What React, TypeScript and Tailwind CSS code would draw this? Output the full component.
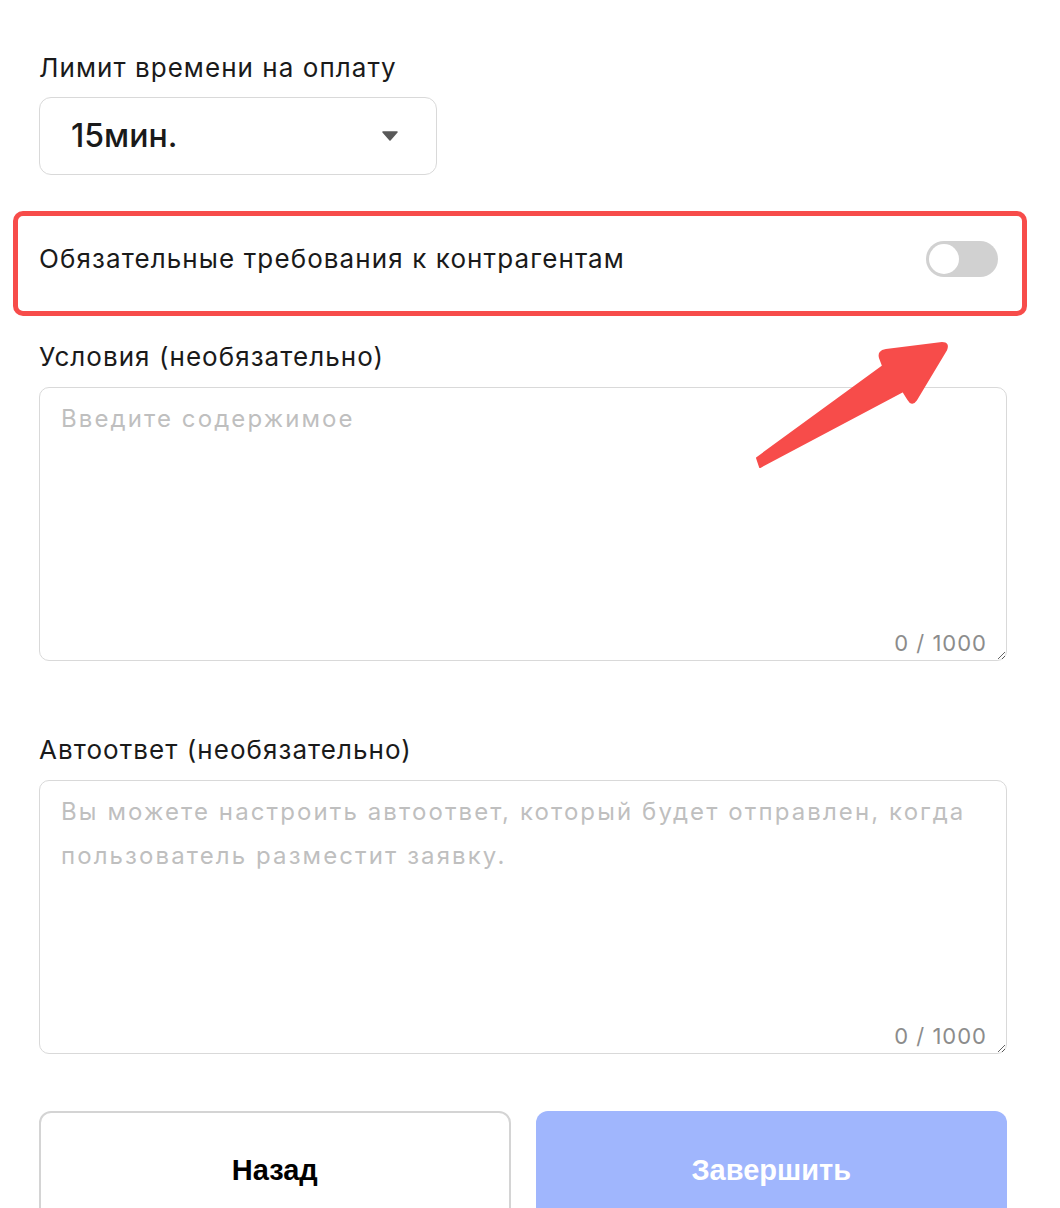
import React from 'react'

const font = { fontFamily: 'Inter, "Noto Sans", sans-serif' }
const btnFont = { fontFamily: '"Liberation Sans", Arial, sans-serif' }

function Counter() {
    return (
        <span className="pointer-events-none absolute bottom-[3px] right-[20px] text-[22px] leading-[30px] tracking-[1px] text-[#8c8c8c]">
            0 / 1000
        </span>
    )
}

function Field({ label, placeholder }: { label: string; placeholder: string }) {
    return (
        <div className="flex flex-col gap-[14px]">
            <label className="text-[26px] leading-[32px] tracking-[1.05px] text-[#1a1a1a]">{label}</label>
            <div className="relative">
                <textarea
                    placeholder={placeholder}
                    className="block h-[274px] w-full resize-y rounded-[10px] border border-[#d9d9d9] bg-white px-[21px] pt-[9px] text-[24px] leading-[44px] tracking-[2.1px] text-[#1a1a1a] outline-none placeholder:text-[#bfbfbf]"
                />
                <Counter />
            </div>
        </div>
    )
}

export default function App() {
    return (
        <div className="relative min-h-[1208px] overflow-hidden bg-white" style={font}>
            <div className="flex flex-col px-[39px] pt-[52px] pr-[53px]">
                <div className="flex flex-col gap-[13px]">
                    <label className="text-[26px] leading-[32px] tracking-[1.05px] text-[#1a1a1a]">Лимит времени на оплату</label>
                    <button className="flex h-[78px] w-[398px] items-center justify-between rounded-[12px] border border-[#d9d9d9] bg-white pl-[31px] pr-[38px]">
                        <span className="text-[32px] font-medium text-[#1a1a1a]">15мин.</span>
                        <svg width="16" height="10" viewBox="0 0 16 10">
                            <path d="M1 1h14l-7 8z" fill="#595959" stroke="#595959" strokeLinejoin="round" strokeWidth={1.5} />
                        </svg>
                    </button>
                </div>

                <div className="-ml-[26px] -mr-[20px] mt-[36px] flex h-[105px] items-center justify-between rounded-[10px] border-[5px] border-[#f74c4a] pb-[10px] pl-[21px] pr-[24px]">
                    <span className="text-[26px] leading-[32px] tracking-[1.1px] text-[#1a1a1a]">Обязательные требования к контрагентам</span>
                    <div className="flex h-[36px] w-[72px] items-center rounded-full bg-[#d1d1d1] p-[3px]">
                        <div className="h-[30px] w-[30px] rounded-full bg-white" />
                    </div>
                </div>

                <div className="mt-[25px]">
                    <Field label="Условия (необязательно)" placeholder="Введите содержимое" />
                </div>

                <div className="mt-[73px]">
                    <Field
                        label="Автоответ (необязательно)"
                        placeholder="Вы можете настроить автоответ, который будет отправлен, когда пользователь разместит заявку."
                    />
                </div>

                <div className="mt-[57px] grid grid-cols-2 gap-[25px]">
                    <button
                        className="h-[120px] rounded-[12px] border-2 border-[#d4d4d4] bg-white text-[29px] font-bold text-black"
                        style={btnFont}
                    >
                        Назад
                    </button>
                    <button
                        className="h-[120px] rounded-[12px] bg-[#a0b6fd] text-[29px] font-bold text-white"
                        style={btnFont}
                    >
                        Завершить
                    </button>
                </div>
            </div>

            {/* annotation arrow */}
            <svg className="pointer-events-none absolute left-0 top-0" width="1060" height="1208" viewBox="0 0 1060 1208">
                <path
                    d="M757 458 L883 366 L880 358 Q878 351 886 350 L942 343 Q949 343 946 350 L916 400 Q912 406 908 399 L903 391 L760 467 Z"
                    fill="#f74c4a"
                    stroke="#f74c4a"
                    strokeLinejoin="round"
                    strokeWidth={2}
                />
            </svg>
        </div>
    )
}
